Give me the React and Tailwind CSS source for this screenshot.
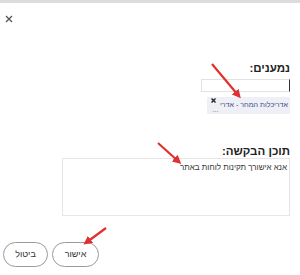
export default function App() {
  return (
    <div className="relative w-[300px] h-[275px] bg-white overflow-hidden rounded-b-[10px] border-t-[3px] border-[#dcdcdc]" style={{ fontFamily: '"Liberation Sans", Arial, sans-serif' }}>
      <div className="pt-[12px] pl-[5px] h-[24px]">
        <svg width="8" height="8" viewBox="0 0 8 8">
          <path d="M1 1 L7 7 M7 1 L1 7" stroke="#555" strokeWidth="1.3" />
        </svg>
      </div>
      <div dir="rtl" className="pr-[10px] pt-[35px] flex flex-col items-start">
        <div className="text-[11.5px] font-bold text-[#222] leading-[12px]">נמענים:</div>
        <div className="mt-[5px] w-[89px] h-[13px] border border-[#e2e2e2] border-r-[#333] border-r-[1.5px] bg-white"></div>
        <div className="mt-[5px] w-[83px] h-[17px] bg-[#eef0f5] flex items-start justify-between pr-[2px] pl-[4px]">
          <div className="pt-[4px] text-[7.1px] leading-[9px] text-[#3b4a8a] whitespace-nowrap">אדריכלות המחר - אדרי</div>
          <div className="flex flex-col items-center pt-[1px]">
            <svg width="5" height="5" viewBox="0 0 5 5">
              <path d="M0.5 0.5 L4.5 4.5 M4.5 0.5 L0.5 4.5" stroke="#222" strokeWidth="1.4" />
            </svg>
            <div className="mt-[4px] mr-[-4px] text-[7px] leading-[5px] text-[#666]">...</div>
          </div>
        </div>
        <div className="mt-[31px] text-[11.5px] font-bold text-[#222] leading-[12px]">תוכן הבקשה:</div>
        <div className="mt-[1px] w-[228px] h-[58px] border border-[#e6e6e6] px-[2px] pt-[4px] text-[8px] leading-[10px] text-[#333]">אנא אישורך תקינות לוחות באתר</div>
      </div>
      <div className="flex gap-[4px] pl-[3px] mt-[26px]">
        <div className="w-[45px] h-[25px] rounded-full border border-[#9a9a9a] flex items-center justify-center text-[9px] text-[#333]">ביטול</div>
        <div className="w-[47px] h-[25px] rounded-full border border-[#9a9a9a] flex items-center justify-center text-[9px] text-[#333]">אישור</div>
      </div>
      <svg className="absolute left-0 top-0 pointer-events-none" width="300" height="275" viewBox="0 0 300 275">
        <defs>
          <marker id="ah" markerWidth="4" markerHeight="4" refX="2" refY="2" orient="auto" markerUnits="strokeWidth">
            <path d="M0 0 L4 2 L0 4 z" fill="#e03030" />
          </marker>
        </defs>
        <line x1="212" y1="61" x2="238" y2="92" stroke="#e03030" strokeWidth="2.2" markerEnd="url(#ah)" />
        <line x1="158" y1="140" x2="178" y2="158" stroke="#e03030" strokeWidth="2.2" markerEnd="url(#ah)" />
        <line x1="106" y1="225" x2="87" y2="239" stroke="#e03030" strokeWidth="2.2" markerEnd="url(#ah)" />
      </svg>
    </div>
  );
}
